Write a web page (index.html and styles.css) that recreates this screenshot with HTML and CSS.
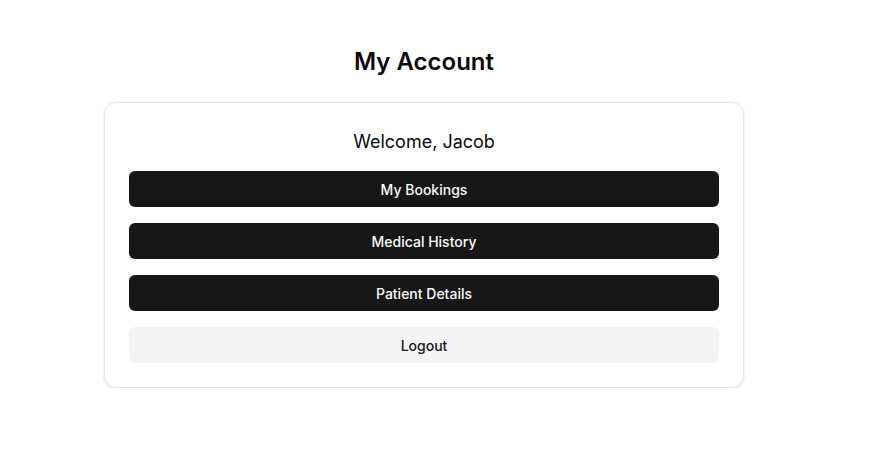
FILE: index.html
```html
<!DOCTYPE html>
<html>
<head>
<meta charset="utf-8">
<link rel="stylesheet" href="styles.css">
</head>
<body>
<main class="page">
  <h1 class="title">My Account</h1>
  <section class="card">
    <h2 class="welcome">Welcome, Jacob</h2>
    <button class="btn btn-dark">My Bookings</button>
    <button class="btn btn-dark">Medical History</button>
    <button class="btn btn-dark">Patient Details</button>
    <button class="btn btn-light">Logout</button>
  </section>
</main>
</body>
</html>
```
FILE: styles.css
```css
* { box-sizing: border-box; }
html, body { margin: 0; padding: 0; background: #fff; }
body { font-family: Inter, "Noto Sans", sans-serif; color: #0a0a0a; }
.page {
  width: 848px;
  display: flex;
  flex-direction: column;
  align-items: center;
  padding-top: 46px;
}
.title {
  margin: 0 0 24px;
  font-size: 24px;
  line-height: 32px;
  font-weight: 600;
}
.card {
  width: 640px;
  border: 1px solid #e5e5e5;
  border-radius: 12px;
  box-shadow: 0 1px 3px rgba(0,0,0,0.1), 0 1px 2px rgba(0,0,0,0.06);
  padding: 24px;
  display: flex;
  flex-direction: column;
  gap: 16px;
}
.welcome {
  margin: 0;
  text-align: center;
  font-size: 18px;
  line-height: 28px;
  font-weight: 400;
  padding-top: 1px;
  height: 28px;
}
.btn {
  height: 36px;
  border: none;
  border-radius: 6px;
  font-family: inherit;
  font-size: 14px;
  font-weight: 500;
  cursor: pointer;
}
.btn-dark { background: #171717; color: #fafafa; }
.btn-light { background: #f4f4f5; color: #171717; }
```
